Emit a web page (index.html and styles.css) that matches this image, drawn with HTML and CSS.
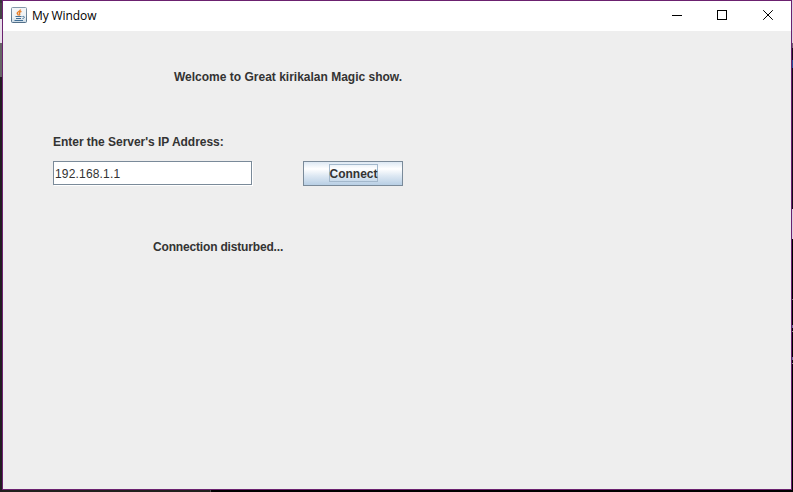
FILE: index.html
```html
<!DOCTYPE html>
<html lang="en">
<head>
<meta charset="utf-8">
<title>My Window</title>
<link rel="stylesheet" href="styles.css">
</head>
<body>
<main class="window">
  <header class="titlebar">
    <svg class="app-icon" width="16" height="16" viewBox="0 0 16 16">
      <defs><linearGradient id="tile" x2="0" y2="1"><stop stop-color="#8499aa"/><stop offset="1" stop-color="#526f89"/></linearGradient>
      <linearGradient id="face" x2="0" y2="1"><stop stop-color="#f4f6f8"/><stop offset=".65" stop-color="#eef2f5"/><stop offset="1" stop-color="#c6d7e3"/></linearGradient></defs>
      <rect x=".5" y=".5" width="15" height="15" rx="1" fill="url(#face)" stroke="url(#tile)"/>
      <path d="M9.500 2.500C9.500 4.500 6 4.500 6.200 6.200C6.300 7.200 7.300 7.500 7.500 8.500M10.500 4.300C8 5.200 8 6 8.700 6.900C9 7.500 8.500 8 8.200 8.500" fill="none" stroke="#e8802b" stroke-width="1.400"/>
      <path d="M4.500 9.500H10.500M5 11.500H10M3.500 13.500H12M11.500 9.500C14.500 9 13.500 11.500 11.500 11.500" fill="none" stroke="#426f96"/>
    </svg>
    <h1 class="title">My Window</h1>
    <svg class="controls" width="102" height="12" viewBox="0 0 102 12" fill="none" stroke="#000" shape-rendering="crispEdges">
      <path d="M0 5.500H10"/>
      <rect x="45.500" y=".5" width="9" height="9"/>
      <path d="M91.200 .2L100.800 9.800M100.800 .2L91.200 9.800" shape-rendering="auto"/>
    </svg>
  </header>
  <section class="content">
    <p class="label welcome">Welcome to Great kirikalan Magic show.</p>
    <label class="label prompt" for="address">Enter the Server's IP Address:</label>
    <div class="row">
      <input class="address" id="address" type="text" value="192.168.1.1">
      <button class="connect" type="button"><span class="focus">Connect</span></button>
    </div>
    <p class="label status">Connection disturbed...</p>
  </section>
</main>
</body>
</html>
```
FILE: styles.css
```css
* { box-sizing: border-box; }
html { background: #000; }
body {
  margin: 0;
  height: 492px;
  padding: 0 1px 2px 2px;
  overflow: hidden;
  background:
    linear-gradient(#39343b 0 3px, #444 3px 19px, #e8e0ea 19px 43px, #666 43px 77px, #211c21 77px) left / 2px 100% no-repeat,
    linear-gradient(#ddd3df 0 43px, #6b606d 43px 48px, #170b1b 48px 60px, #244e93 60px 68px, #170b1b 68px 209px, #dccfe0 209px 239px, #000 239px 299px, #777 299px 300px, #000 300px 325px, #6d6b98 325px 328px, #000 328px 331px, #888 331px 332px, #000 332px 357px, #6d6b98 357px 360px, #000 360px 363px, #888 363px 364px, #000 364px) right / 1px 100% no-repeat,
    linear-gradient(90deg, #20201d 210px, #484848 210px 211px, #000 211px) bottom / 100% 2px no-repeat;
}
.window {
  height: 490px;
  border: 1px solid #6b216f;
  background: #eee;
}
.titlebar {
  display: flex;
  align-items: flex-start;
  height: 30px;
  padding: 6px 17px 0 8px;
  background: #fff;
}
.app-icon { flex: none; }
.title {
  margin: 1px 0 0 5px;
  font: 400 12px/16px "Open Sans", "Noto Sans", sans-serif;
  letter-spacing: -.1px;
  color: #000;
}
.controls { margin: 3px 0 0 auto; }
.content {
  display: flex;
  flex-direction: column;
  align-items: flex-start;
  padding: 38px 0 0 50px;
}
.label {
  margin: 0;
  font: 700 12px/16px "Liberation Sans", Arial, sans-serif;
  color: #333;
  white-space: nowrap;
}
.welcome { margin-left: 121px; }
.prompt { margin-top: 49px; letter-spacing: -.03px; }
.row {
  display: flex;
  gap: 51px;
  margin-top: 11px;
}
.address {
  width: 199px;
  height: 24px;
  padding: 1px 1px 0;
  border: 1px solid #7a8a99;
  border-radius: 0;
  outline: 0;
  background: #fff;
  box-shadow: 1px 1px #fff;
  font: 12px/16px "Liberation Sans", Arial, sans-serif;
  letter-spacing: .17px;
  color: #333;
}
.connect {
  display: flex;
  align-items: center;
  justify-content: center;
  width: 100px;
  height: 25px;
  padding: 0;
  border: 1px solid #7a8a99;
  background: linear-gradient(#dde8f3, #fff 30%, #dde8f3 60%, #b8cfe5);
  font: 700 12px/18px "Liberation Sans", Arial, sans-serif;
  color: #333;
}
.focus {
  width: 49px;
  height: 18px;
  margin-top: -1px;
  border: 1px solid #a3b8cc;
}
.status { margin: 53px 0 0 100px; letter-spacing: -.17px; }
```
